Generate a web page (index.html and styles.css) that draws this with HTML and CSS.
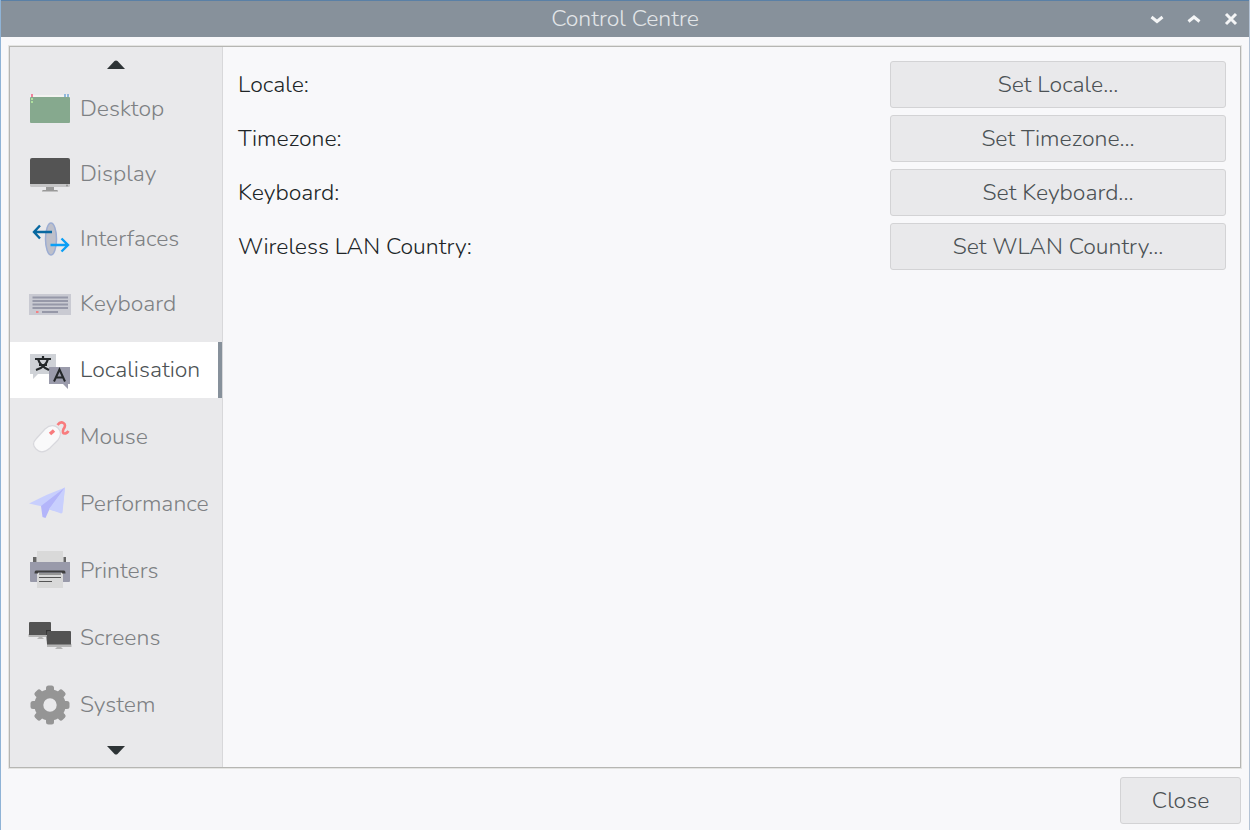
FILE: index.html
```html
<!DOCTYPE html>
<html lang="en-GB">
<head>
<meta charset="utf-8">
<title>Control Centre</title>
<link rel="stylesheet" href="styles.css">
</head>
<body>
<div class="window">
  <header class="titlebar">
    <h1 class="title">Control Centre</h1>
    <div class="controls">
      <button class="control" type="button" aria-label="Minimise"><svg width="14" height="14" viewBox="0 0 14 14"><path d="M1.500 5l5.500 4.500L12.500 5"/></svg></button>
      <button class="control" type="button" aria-label="Maximise"><svg width="14" height="14" viewBox="0 0 14 14"><path d="M1.500 9.500L7 5l5.500 4.500"/></svg></button>
      <button class="control" type="button" aria-label="Close window"><svg width="14" height="14" viewBox="0 0 14 14"><path d="M2 2l10 10M12 2L2 12"/></svg></button>
    </div>
  </header>

  <div class="notebook">
    <nav class="sidebar" aria-label="Settings">
      <button class="scroll" type="button" aria-label="Scroll up"><svg width="18" height="9" viewBox="0 0 18 9"><path fill="#2e3436" d="M0 9L7.500 1Q9 0 10.500 1L18 9z"/></svg></button>
      <div class="tabs" role="tablist" aria-orientation="vertical">
        <button class="tab compact" type="button" role="tab">
          <svg class="icon" viewBox="0 0 44 44"><path fill="#f3f3f1" d="M2 8h40v3H2z"/><path fill="#86a98e" d="M3 10h38q1 0 1 1v24q0 1-1 1H3q-1 0-1-1V11q0-1 1-1z"/><path fill="#f0829b" d="M3 7h2v3H3z"/><path fill="#91b9dc" d="M36 7h2v3h-2zM39 7h2v3h-2z"/><path fill="#aee09d" d="M3 11h2v2H3zM3 14h2v2H3z"/></svg>
          <span>Desktop</span>
        </button>
        <button class="tab compact" type="button" role="tab">
          <svg class="icon" viewBox="0 0 44 44"><path fill="#999" d="M18 35h8v3h3q1 0 1 1.500H14q0-1.500 1-1.500h3z"/><path fill="#c5c5c6" d="M2 31h40v2.500q0 1.500-1.500 1.500h-37Q2 35 2 33.500z"/><path fill="#545454" d="M4 6h36q2 0 2 2v24H2V8q0-2 2-2z"/><circle cx="39" cy="33.500" r="1" fill="#929292"/></svg>
          <span>Display</span>
        </button>
        <button class="tab compact" type="button" role="tab">
          <svg class="icon" viewBox="0 0 44 44" fill="none"><ellipse cx="23" cy="22" rx="5.500" ry="16" fill="#bec0ca" stroke="#9cadd3" stroke-width="1.500"/><path stroke="#0868a0" stroke-width="2.400" d="M6 15h18M12 8.500L6 15l6 6.500"/><path stroke="#0b9ff5" stroke-width="2.400" d="M22.500 28H40M33.500 21.500L40 28l-6.500 6.500"/></svg>
          <span>Interfaces</span>
        </button>
        <button class="tab compact" type="button" role="tab">
          <svg class="icon" viewBox="0 0 44 44"><path fill="#c9cad2" d="M1 12h42v21H1z"/><path stroke="#9698a8" stroke-width="2" d="M4.500 15.500h35.500M4.500 19h35.500M4.500 22.500h35.500M4.500 26h35.500M14 30h16"/><path fill="#f48184" d="M8 29h2.500v2H8z"/></svg>
          <span>Keyboard</span>
        </button>
        <button class="tab selected" type="button" role="tab" aria-selected="true">
          <svg class="icon" viewBox="0 0 44 44"><path fill="#cfd2d7" d="M2 6h26v20H10l-5 5v-5H2z"/><path fill="#9a9bab" d="M21 19h21v17h-2v5l-5-5H21z"/><path fill="none" stroke="#24282a" stroke-width="2.200" d="M7 11h16M15 8v3M10 11q2 7 11 11M20 11q-2 8-12 11M11 17h8"/><path fill="none" stroke="#24282a" stroke-width="2" d="M26 33.500l5.500-12 5.500 12M28 29.500h7"/></svg>
          <span>Localisation</span>
        </button>
        <button class="tab" type="button" role="tab">
          <svg class="icon" viewBox="0 0 44 44" fill="none"><path fill="#f9f9fa" stroke="#d8d8dd" stroke-width="1.200" d="M8 24L17 14q7-6 13-1 5 5 0 12l-8 8q-8 7-14 1-5-5 0-10z"/><path stroke="#f87b7d" stroke-width="3.500" d="M22 19l4-3.500"/><path stroke="#f87b7d" stroke-width="2.600" d="M29.500 10q3-4 6-2t0 6q-2 5 2 4.500 2-1 3-2.500"/></svg>
          <span>Mouse</span>
        </button>
        <button class="tab" type="button" role="tab">
          <svg class="icon" viewBox="0 0 44 44"><path fill="#c8cffd" d="M1 21.500Q19 12 37 5.500l-3 25-10-2-9.500-4z"/><path fill="#b3b5fa" d="M37 5.500L13 24l1.500 11 3 1 4-9z"/><path fill="#c8cffd" d="M37 5.500L21 27l12 4.500q1 0 1.500-1z"/></svg>
          <span>Performance</span>
        </button>
        <button class="tab" type="button" role="tab">
          <svg class="icon" viewBox="0 0 44 44"><path fill="#666" d="M5 8h33v8H5z"/><path fill="#e9e9ea" d="M8.500 2h27v13h-27z"/><path fill="#d9d9d9" d="M9 2h26v13H9z"/><path fill="#999aaa" d="M2 13h40v19q0 1-1 1H3q-1 0-1-1z"/><path fill="#d9d9d9" d="M9 24h26v15H9z"/><path fill="#3e3e3e" d="M8 21.500h28q1.500 0 1.500 3H34v-1H10v1H6.500q0-3 1.500-3z"/><path stroke="#555" stroke-width="1.200" d="M11 25h22M11 28.500h22M11 32.500h13"/></svg>
          <span>Printers</span>
        </button>
        <button class="tab" type="button" role="tab">
          <svg class="icon" viewBox="0 0 44 44"><path fill="#b5b5b5" d="M.500 18h23v3H.500zM9 23l2-2h3l2 2zM19 28h24.500v3H19zM27 33l2-2h4l2 2z"/><path fill="#535353" d="M2 6h20q1 0 1 1v12H1V7q0-1 1-1z"/><path fill="#333" d="M18 14h5v14h-4z"/><path fill="#535353" d="M20 15h22q1 0 1 1v13H19V16q0-1 1-1z"/><path fill="#b5b5b5" d="M1 19h18v1.500H1zM19 28.500h24V30H19z"/></svg>
          <span>Screens</span>
        </button>
        <button class="tab" type="button" role="tab">
          <svg class="icon" viewBox="0 0 44 44"><g fill="#959595"><rect id="tooth" x="18" y="2.500" width="8" height="10" rx="2.500"/><use href="#tooth" transform="rotate(45 22 22)"/><use href="#tooth" transform="rotate(90 22 22)"/><use href="#tooth" transform="rotate(135 22 22)"/><use href="#tooth" transform="rotate(180 22 22)"/><use href="#tooth" transform="rotate(225 22 22)"/><use href="#tooth" transform="rotate(270 22 22)"/><use href="#tooth" transform="rotate(315 22 22)"/></g><circle cx="22" cy="22" r="11.200" fill="none" stroke="#959595" stroke-width="9"/></svg>
          <span>System</span>
        </button>
      </div>
      <button class="scroll" type="button" aria-label="Scroll down"><svg width="18" height="9" viewBox="0 0 18 9"><path fill="#2e3436" d="M0 0L7.500 8Q9 9 10.500 8L18 0z"/></svg></button>
    </nav>

    <main class="page" role="tabpanel" aria-label="Localisation">
      <div class="row"><label for="locale">Locale:</label><button id="locale" class="button" type="button">Set Locale...</button></div>
      <div class="row"><label for="timezone">Timezone:</label><button id="timezone" class="button" type="button">Set Timezone...</button></div>
      <div class="row"><label for="keyboard">Keyboard:</label><button id="keyboard" class="button" type="button">Set Keyboard...</button></div>
      <div class="row"><label for="wlan">Wireless LAN Country:</label><button id="wlan" class="button" type="button">Set WLAN Country...</button></div>
    </main>
  </div>

  <footer class="actions"><button class="button" type="button">Close</button></footer>
</div>
</body>
</html>
```

FILE: styles.css
```css
* {
  box-sizing: border-box;
}

body {
  margin: 0;
  background: #f8f8fa;
  color: #202527;
  font: 300 23px/28px Nunito, "Open Sans", "Noto Sans", sans-serif;
}

button {
  font: inherit;
  color: inherit;
  margin: 0;
  padding: 0;
  border: 0;
  background: none;
}

.window {
  display: flex;
  flex-direction: column;
  min-height: 100vh;
  border-left: 1px solid #8fb3d6;
  border-right: 1px solid #b4c3d5;
}

.titlebar {
  display: grid;
  grid-template-columns: 1fr auto 1fr;
  align-items: center;
  height: 37px;
  background: #87919b;
  border-top: 1px solid #5a80a6;
}

.title {
  grid-column: 2;
  margin: 0;
  font-size: 23px;
  font-weight: 300;
  line-height: 28px;
  color: #e2e5e8;
}

.controls {
  display: flex;
  justify-content: flex-end;
  gap: 13px;
  padding-right: 6px;
}

.control {
  display: grid;
  place-items: center;
  width: 24px;
  height: 24px;
}

.control path {
  fill: none;
  stroke: #f4f5f6;
  stroke-width: 3;
}

.notebook {
  flex: 1;
  display: flex;
  margin: 9px 8px 0;
  border: 1px solid #b6b6b3;
  outline: 1px solid #e4e4e2;
}

.sidebar {
  display: flex;
  flex-direction: column;
  width: 213px;
  background: #e9e9eb;
  border-right: 1px solid #d8d8da;
}

.scroll {
  display: grid;
  place-items: center;
  height: 35px;
}

.tabs + .scroll {
  height: 34px;
}

.tabs {
  flex: 1;
  display: flex;
  flex-direction: column;
  gap: 11px;
}

.tab {
  display: flex;
  align-items: center;
  gap: 8px;
  height: 56px;
  padding-left: 18px;
  color: #7e8184;
}

.compact {
  height: 54px;
}

.selected {
  background: #fff;
  color: #4c5255;
  border-right: 4px solid #87919b;
}

.icon {
  flex: none;
  width: 44px;
  height: 44px;
}

.page {
  flex: 1;
  display: flex;
  flex-direction: column;
  gap: 7px;
  padding: 14px 14px 14px 15px;
}

.row {
  display: grid;
  grid-template-columns: 66fr 34fr;
  align-items: center;
}

.button {
  height: 47px;
  background: #e9e9eb;
  border: 1px solid #d3d3d5;
  border-radius: 3px;
  color: #4c5255;
}

.actions {
  display: flex;
  justify-content: flex-end;
  padding: 9px 8px 6px;
}

.actions .button {
  width: 121px;
}
```
